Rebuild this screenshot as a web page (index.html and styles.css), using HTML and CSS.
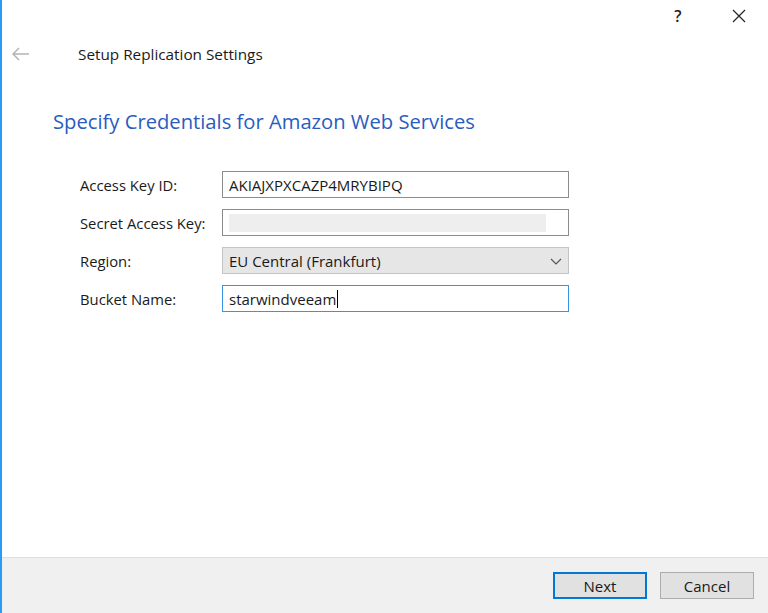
FILE: index.html
```html
<!DOCTYPE html>
<html>
<head>
<meta charset="utf-8">
<link rel="stylesheet" href="styles.css">
</head>
<body>
<div class="window">
  <div class="titlebar">
    <span class="tb-btn help">?</span>
    <span class="tb-btn close">
      <svg width="14" height="14" viewBox="0 0 14 14"><path d="M1 1 L13 13 M13 1 L1 13" stroke="#222" stroke-width="1.2" fill="none"/></svg>
    </span>
  </div>
  <div class="header">
    <span class="back">
      <svg width="18" height="14" viewBox="0 0 18 14"><path d="M1 7 H17 M7 1 L1 7 L7 13" stroke="#b4b4b4" stroke-width="1.5" fill="none"/></svg>
    </span>
    <span class="title">Setup Replication Settings</span>
  </div>
  <div class="content">
    <h1 class="heading">Specify Credentials for Amazon Web Services</h1>
    <div class="form">
      <label class="label">Access Key ID:</label>
      <div class="field">AKIAJXPXCAZP4MRYBIPQ</div>
      <label class="label">Secret Access Key:</label>
      <div class="field"><span class="masked"></span></div>
      <label class="label">Region:</label>
      <div class="field select">EU Central (Frankfurt)
        <svg class="chev" width="12" height="7" viewBox="0 0 12 7"><path d="M1 1 L6 6 L11 1" stroke="#555" stroke-width="1.2" fill="none"/></svg>
      </div>
      <label class="label">Bucket Name:</label>
      <div class="field focus">starwindveeam<span class="caret"></span></div>
    </div>
  </div>
  <div class="footer">
    <button class="btn primary">Next</button>
    <button class="btn">Cancel</button>
  </div>
</div>
</body>
</html>
```

FILE: styles.css
```css
html, body {
  margin: 0;
  padding: 0;
  background: #ffffff;
}
body {
  width: 768px;
  height: 613px;
  overflow: hidden;
  font-family: "Open Sans", "Noto Sans", sans-serif;
  color: #1a1a1a;
}
.window {
  box-sizing: border-box;
  height: 613px;
  border-left: 2px solid #2b9af3;
  display: flex;
  flex-direction: column;
}
.titlebar {
  height: 32px;
  display: flex;
  justify-content: flex-end;
  align-items: center;
}
.tb-btn {
  display: flex;
  align-items: center;
  justify-content: center;
  width: 46px;
  height: 32px;
  font-size: 16px;
  color: #222;
}
.help {
  margin-right: 15px;
  font-weight: 600;
}
.close {
  margin-right: 6px;
}
.header {
  height: 44px;
  display: flex;
  align-items: center;
}
.back {
  display: flex;
  margin-left: 10px;
  width: 66px;
}
.title {
  font-size: 15.3px;
  color: #1a1a1a;
}
.content {
  flex: 1;
  padding-left: 51px;
}
.heading {
  margin: 31px 0 0 0;
  font-size: 20.2px;
  line-height: 28px;
  font-weight: 400;
  color: #2a5cbf;
}
.form {
  margin-top: 36px;
  margin-left: 27px;
  display: grid;
  grid-template-columns: 142px 347px;
  grid-auto-rows: 27px;
  row-gap: 11px;
  align-items: center;
}
.label {
  font-size: 14.8px;
  color: #1a1a1a;
}
.field {
  box-sizing: border-box;
  height: 27px;
  border: 1px solid #8c8c8c;
  background: #fff;
  font-size: 15px;
  padding: 0 6px;
  display: flex;
  align-items: center;
  position: relative;
}
.masked {
  display: block;
  width: 317px;
  height: 18px;
  background: #eeeeee;
}
.select {
  background: #e6e6e6;
  border-color: #c4c4c4;
}
.chev {
  position: absolute;
  right: 6px;
  top: 10px;
}
.focus {
  border-color: #3a94e6;
}
.caret {
  display: inline-block;
  width: 1px;
  height: 18px;
  background: #000;
  margin-left: 1px;
}
.footer {
  box-sizing: border-box;
  height: 56px;
  background: #f0f0f0;
  border-top: 1px solid #dfdfdf;
  display: flex;
  justify-content: flex-end;
  align-items: flex-start;
  padding-top: 14px;
  padding-right: 14px;
  gap: 13px;
}
.btn {
  box-sizing: border-box;
  width: 94px;
  height: 27px;
  background: #e1e1e1;
  border: 1px solid #adadad;
  font-family: "Open Sans", "Noto Sans", sans-serif;
  font-size: 15px;
  color: #1a1a1a;
  padding: 0;
}
.primary {
  border: 2px solid #0078d7;
}
```
